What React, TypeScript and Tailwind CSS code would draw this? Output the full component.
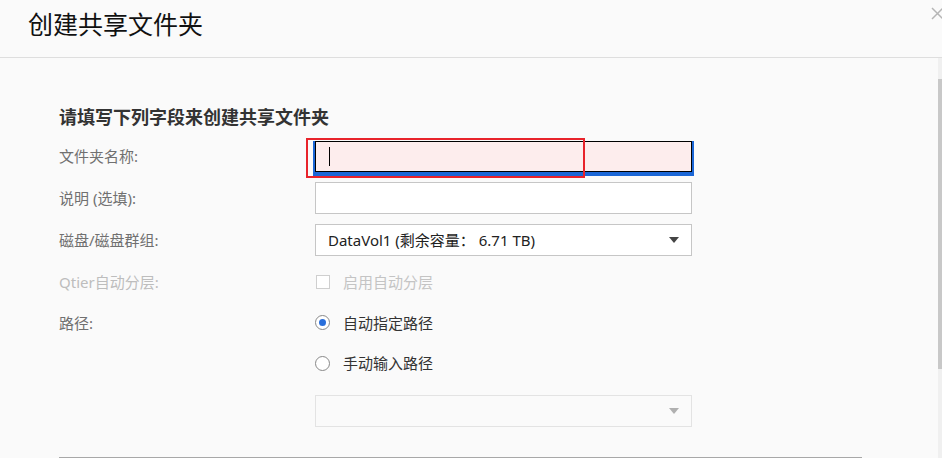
import { useState } from "react";

const font = { fontFamily: '"Noto Sans", "Noto Sans CJK SC", sans-serif' };

const Label = ({ text, muted }: { text: string; muted?: boolean }) => (
    <div className={`w-[256px] shrink-0 text-[15px] leading-[22px] ${muted ? "text-[#bdbdbd]" : "text-[#707070]"}`}>
        {text}
    </div>
);

const Arrow = ({ color }: { color: string }) => (
    <span
        className="h-0 w-0 border-x-[5px] border-t-[6px] border-x-transparent"
        style={{ borderTopColor: color }}
    />
);

export default function App() {
    const [mode, setMode] = useState("auto");

    return (
        <div className="flex h-[458px] w-[942px] flex-col overflow-hidden bg-[#fafafa]" style={font}>
            {/* header */}
            <div className="relative flex h-[58px] shrink-0 items-center overflow-hidden border-b border-[#dedede] pl-[28px]">
                <h1 className="pb-[8px] text-[25px] text-[#111]">创建共享文件夹</h1>
                <svg className="absolute left-[931px] top-[7px]" width="14" height="14" viewBox="0 0 14 14">
                    <path d="M1 1 L12 12 M12 1 L1 12" stroke="#b5b5b5" strokeWidth="1.5" fill="none" />
                </svg>
            </div>

            <div className="flex min-h-0 flex-1">
                <div className="flex-1 pl-[59px] pt-[46px]">
                    <div className="w-[803px]">
                        <h2 className="mb-[5px] text-[18px] font-bold leading-[26px] text-[#333]">
                            请填写下列字段来创建共享文件夹
                        </h2>

                        <div className="flex h-[42px] items-center">
                            <Label text="文件夹名称:" />
                            <div className="relative">
                                <div className="flex h-[31px] w-[377px] items-center border border-black bg-[#fdeded] pl-[13px] shadow-[0_2px_0_2px_#1b66d6]">
                                    <span className="h-[19px] w-px bg-black" />
                                </div>
                                <div className="absolute left-[-9px] top-[-3px] h-[40px] w-[279px] border-2 border-[#e8232b]" />
                            </div>
                        </div>

                        <div className="flex h-[42px] items-center">
                            <Label text="说明 (选填):" />
                            <div className="h-[32px] w-[377px] border border-[#c6c6c6] bg-white" />
                        </div>

                        <div className="flex h-[42px] items-center">
                            <Label text="磁盘/磁盘群组:" />
                            <div className="flex h-[32px] w-[377px] items-center justify-between border border-[#c6c6c6] bg-white pl-[12px] pr-[12px] text-[15px] text-[#222]">
                                <span>DataVol1 (剩余容量： 6.71 TB)</span>
                                <Arrow color="#444" />
                            </div>
                        </div>

                        <div className="flex h-[41px] items-center">
                            <Label text="Qtier自动分层:" muted />
                            <div className="flex items-center gap-[13px] text-[15px] leading-[22px] text-[#c4c4c4]">
                                <span className="ml-[1px] h-[14px] w-[14px] border border-[#cfcfcf] bg-white" />
                                <span>启用自动分层</span>
                            </div>
                        </div>

                        <div className="flex h-[41px] items-center">
                            <Label text="路径:" />
                            <button
                                onClick={() => setMode("auto")}
                                className="flex items-center gap-[13px] text-[15px] leading-[22px] text-[#333]"
                            >
                                <span className="flex h-[15px] w-[15px] items-center justify-center rounded-full border border-[#888] bg-white">
                                    {mode === "auto" && <span className="h-[7px] w-[7px] rounded-full bg-[#2a6fdb]" />}
                                </span>
                                <span>自动指定路径</span>
                            </button>
                        </div>

                        <div className="flex h-[40px] items-center">
                            <div className="w-[256px] shrink-0" />
                            <button
                                onClick={() => setMode("manual")}
                                className="flex items-center gap-[13px] text-[15px] leading-[22px] text-[#333]"
                            >
                                <span className="flex h-[15px] w-[15px] items-center justify-center rounded-full border border-[#888] bg-white">
                                    {mode === "manual" && <span className="h-[7px] w-[7px] rounded-full bg-[#2a6fdb]" />}
                                </span>
                                <span>手动输入路径</span>
                            </button>
                        </div>

                        <div className="mt-[12px] flex">
                            <div className="w-[256px] shrink-0" />
                            <div className="flex h-[32px] w-[377px] items-center justify-end border border-[#e3e3e3] bg-[#fafafa] pr-[12px]">
                                <Arrow color="#b0b0b0" />
                            </div>
                        </div>

                        <div className="mt-[30px] h-[2px] w-[803px] bg-[#a8a8a8]" />
                    </div>
                </div>

                {/* scrollbar */}
                <div className="flex w-[4px] shrink-0 flex-col bg-[#f0f0f0] pt-[21px]">
                    <div className="h-[290px] w-full bg-[#c8c8c8]" />
                </div>
            </div>
        </div>
    );
}
